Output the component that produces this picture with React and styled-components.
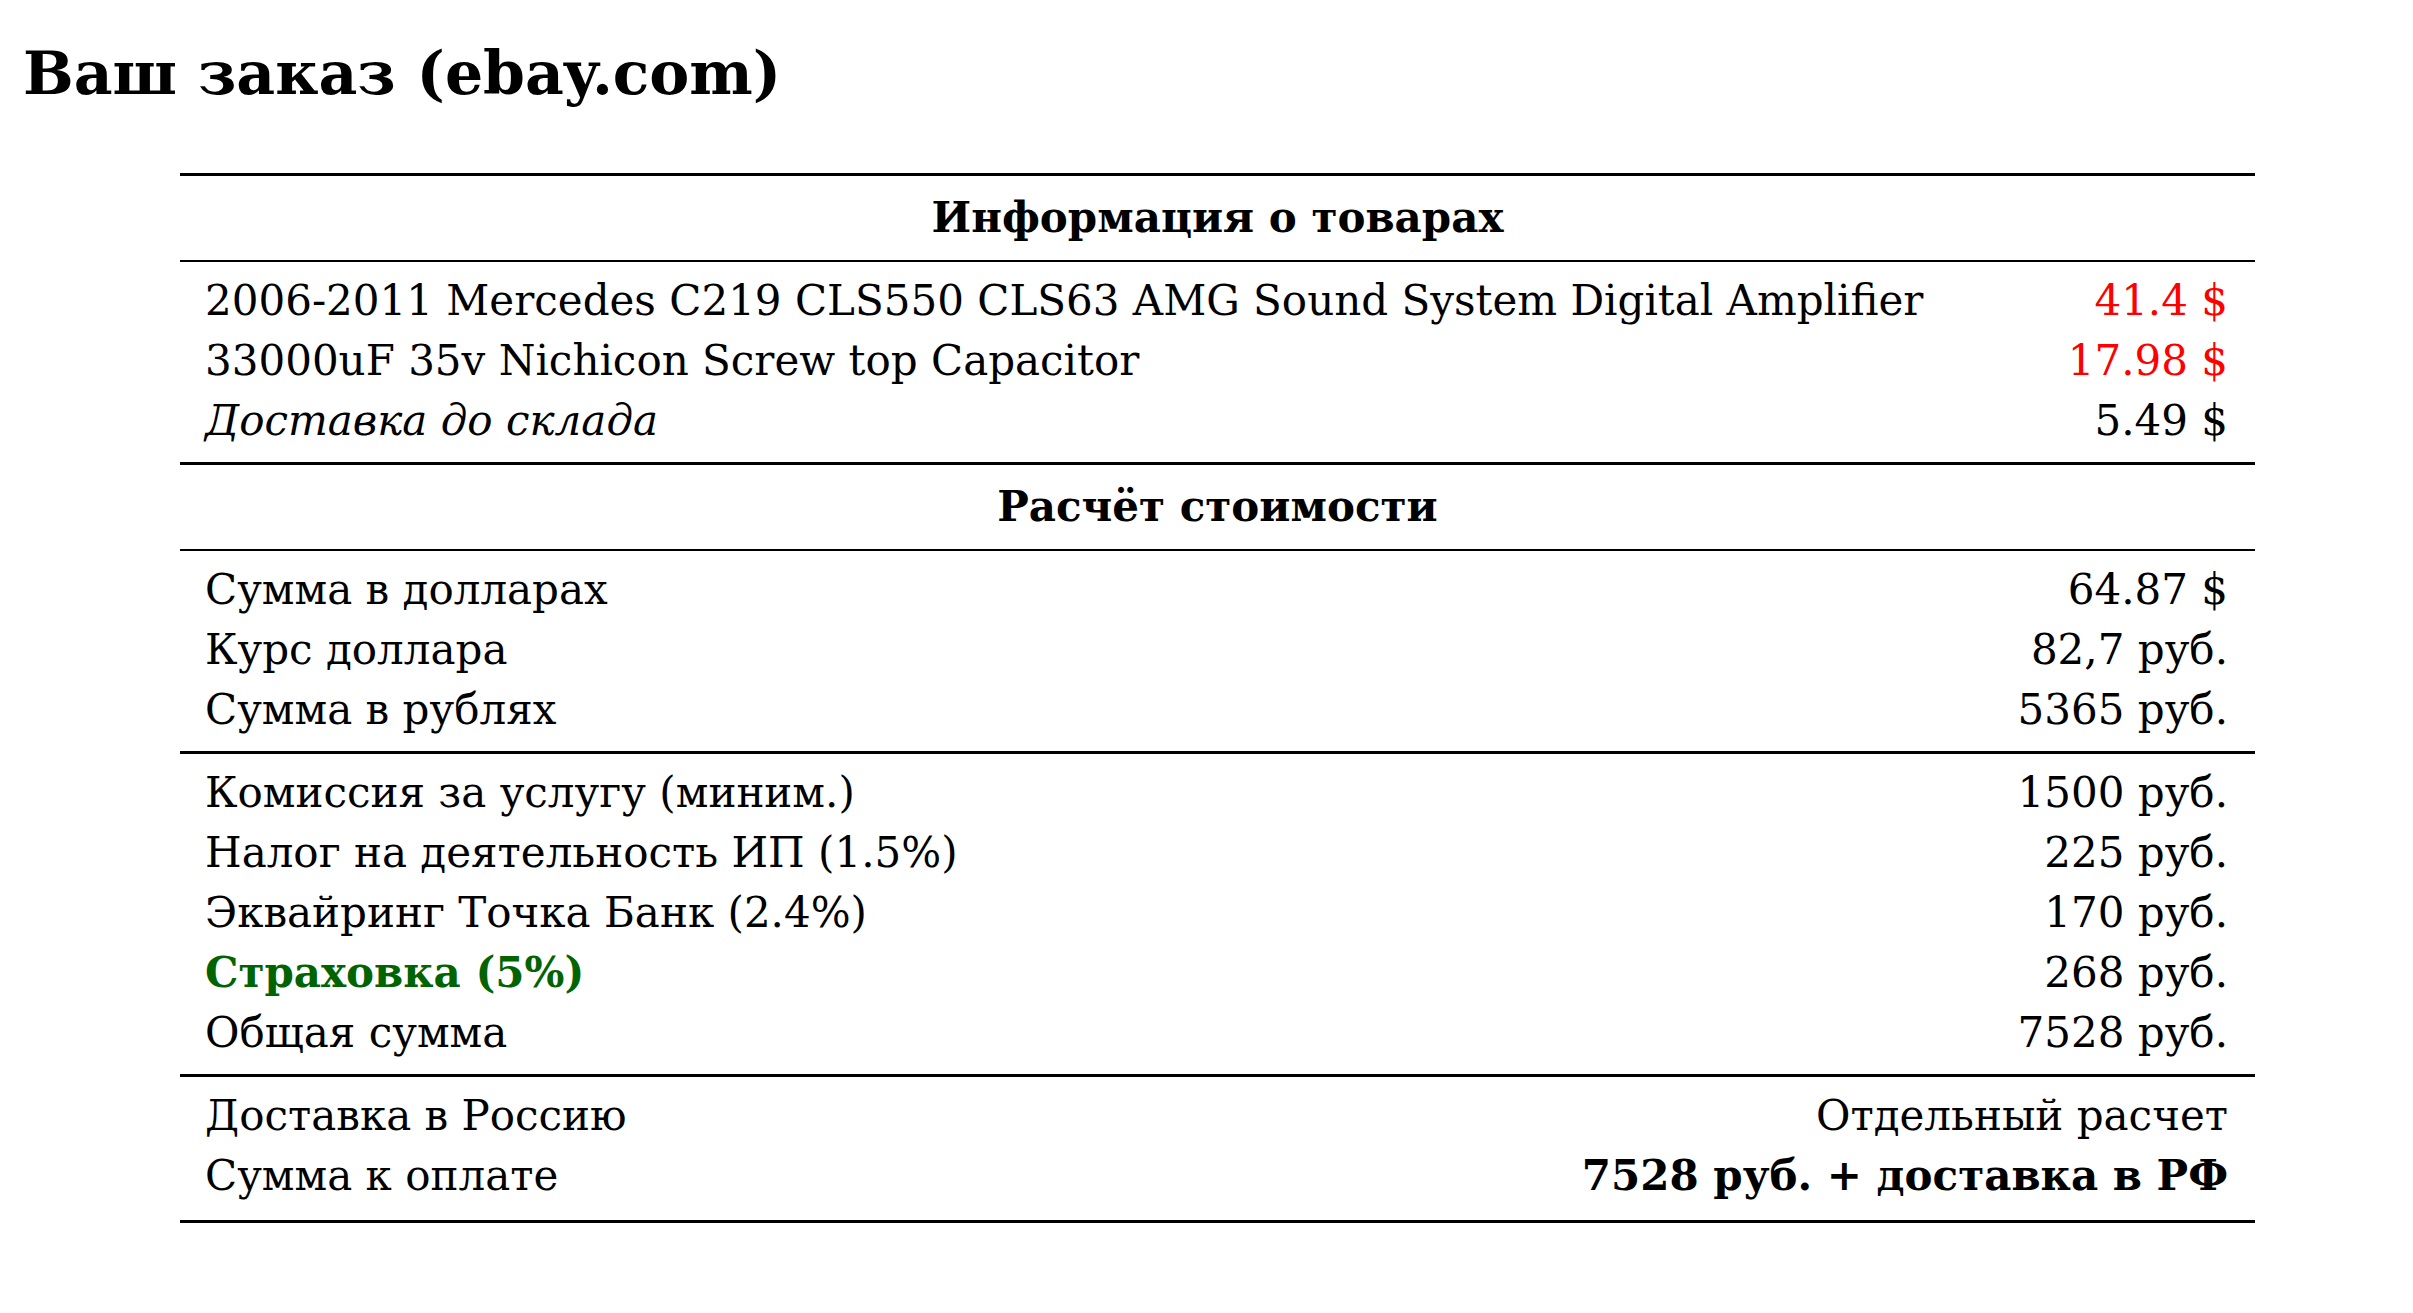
import React from 'react';
import styled, { createGlobalStyle } from 'styled-components';

const GlobalStyle = createGlobalStyle`
  body {
    margin: 0;
    background: #fff;
    color: #000;
    font-family: "DejaVu Serif", "Liberation Serif", serif;
  }
`;

const Page = styled.div`
  padding: 0 0 40px 23px;
`;

const Title = styled.h1`
  margin: 0;
  padding-top: 28px;
  font-size: 60px;
  line-height: 90px;
  font-weight: bold;
`;

const Sheet = styled.section`
  margin: 55px 0 0 157px;
  width: 2075px;
  font-size: 42px;
  line-height: 60px;
  border-top: 3px solid #000;
  border-bottom: 3px solid #000;
`;

const SectionHead = styled.h2`
  margin: 0;
  padding: 12px 25px;
  border-bottom: 2px solid #000;
  text-align: center;
  font-size: 42px;
  line-height: 60px;
  font-weight: bold;
`;

const Group = styled.div`
  padding: 9px 27px ${p => (p.$last ? '14px' : '11px')} 25px;
  border-bottom: ${p => (p.$last ? 'none' : '3px solid #000')};
`;

const Row = styled.div`
  display: flex;
  justify-content: space-between;
  gap: 40px;
  white-space: nowrap;
`;

const Label = styled.span`
  font-style: ${p => (p.$italic ? 'italic' : 'normal')};
  font-weight: ${p => (p.$bold ? 'bold' : 'normal')};
  color: ${p => p.$color || '#000'};
`;

const Value = styled.span`
  text-align: right;
  font-weight: ${p => (p.$bold ? 'bold' : 'normal')};
  color: ${p => p.$color || '#000'};
`;

const Line = ({ label, value, italic, labelBold, labelColor, valueColor, valueBold }) => (
  <Row>
    <Label $italic={italic} $bold={labelBold} $color={labelColor}>{label}</Label>
    <Value $color={valueColor} $bold={valueBold}>{value}</Value>
  </Row>
);

export default function App() {
  return (
    <Page>
      <GlobalStyle />
      <Title>Ваш заказ (ebay.com)</Title>
      <Sheet>
        <SectionHead>Информация о товарах</SectionHead>
        <Group>
          <Line label="2006-2011 Mercedes C219 CLS550 CLS63 AMG Sound System Digital Amplifier" value="41.4 $" valueColor="#ff0000" />
          <Line label="33000uF 35v Nichicon Screw top Capacitor" value="17.98 $" valueColor="#ff0000" />
          <Line label="Доставка до склада" value="5.49 $" italic />
        </Group>
        <SectionHead>Расчёт стоимости</SectionHead>
        <Group>
          <Line label="Сумма в долларах" value="64.87 $" />
          <Line label="Курс доллара" value="82,7 руб." />
          <Line label="Сумма в рублях" value="5365 руб." />
        </Group>
        <Group>
          <Line label="Комиссия за услугу (миним.)" value="1500 руб." />
          <Line label="Налог на деятельность ИП (1.5%)" value="225 руб." />
          <Line label="Эквайринг Точка Банк (2.4%)" value="170 руб." />
          <Line label="Страховка (5%)" value="268 руб." labelBold labelColor="#006400" />
          <Line label="Общая сумма" value="7528 руб." />
        </Group>
        <Group $last>
          <Line label="Доставка в Россию" value="Отдельный расчет" />
          <Line label="Сумма к оплате" value="7528 руб. + доставка в РФ" valueBold />
        </Group>
      </Sheet>
    </Page>
  );
}
